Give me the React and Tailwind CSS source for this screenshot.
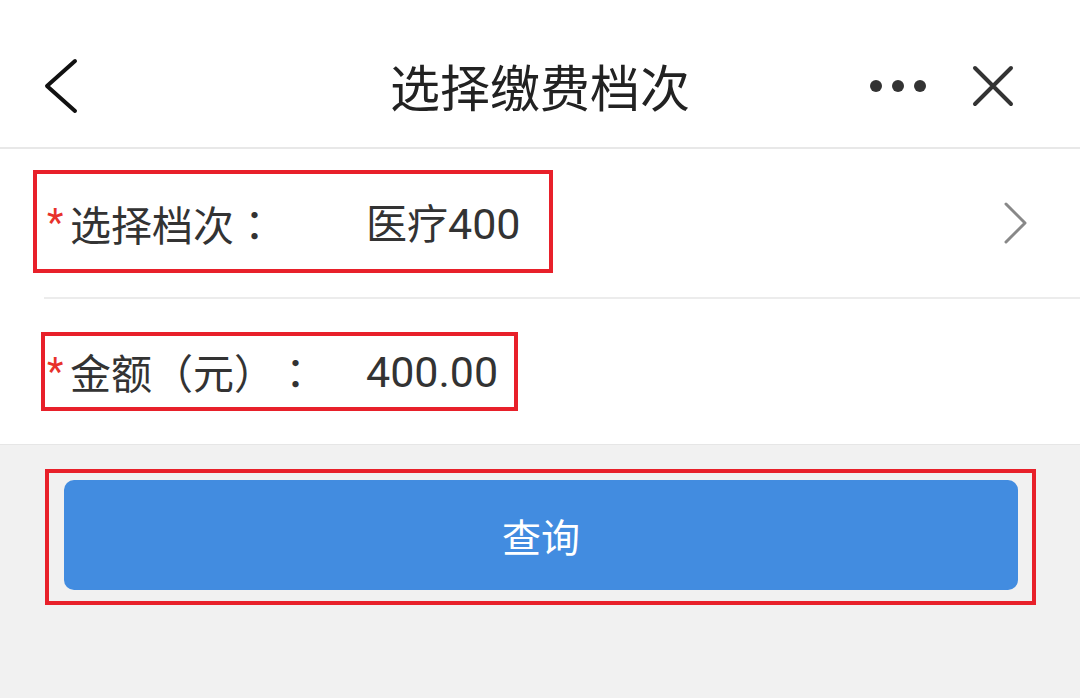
import React from "react";

const font = { fontFamily: '"Noto Sans CJK SC", "Noto Sans", sans-serif' };
// full-width punctuation sits centered / hugging like the Android render
const punct = { fontFamily: '"Noto Sans CJK JP", sans-serif' };
const latin = { fontFamily: 'Roboto, "Noto Sans CJK SC", sans-serif' };

function BackIcon() {
  return (
    <svg width="36" height="56" viewBox="0 0 36 56" fill="none">
      <polyline points="33,3 5,28 33,53" stroke="#111" strokeWidth="4" strokeLinecap="round" strokeLinejoin="round" />
    </svg>
  );
}

function CloseIcon() {
  return (
    <svg width="44" height="44" viewBox="0 0 44 44" fill="none">
      <path d="M4 4 L40 40 M40 4 L4 40" stroke="#333" strokeWidth="4" strokeLinecap="round" />
    </svg>
  );
}

function ChevronRight() {
  return (
    <svg width="26" height="44" viewBox="0 0 26 44" fill="none">
      <polyline points="3,3 22,22 3,41" stroke="#888" strokeWidth="3" strokeLinecap="round" strokeLinejoin="round" />
    </svg>
  );
}

function Field({ label, value }) {
  return (
    <div className="flex items-center [text-spacing-trim:space-all]">
      <span className="w-[23px] text-[38px] leading-none text-[#e8322b]" style={latin}>*</span>
      <span className="w-[296px] text-[41px] leading-none text-[#333]">{label}</span>
      <span className="text-[41px] leading-none text-[#333]">{value}</span>
    </div>
  );
}

const P = ({ children }) => <span style={punct}>{children}</span>;
const N = ({ children }) => <span className="text-[43px]" style={latin}>{children}</span>;

export default function App() {
  return (
    <div className="w-[1080px] h-[698px] bg-[#f1f1f1] overflow-hidden" style={font}>
      {/* nav bar */}
      <header className="h-[147px] bg-white grid grid-cols-[1fr_auto_1fr] items-center pt-[22px]">
        <div className="pl-[42px] flex items-center pt-[2px]">
          <BackIcon />
        </div>
        <h1 className="text-[50px] leading-none text-[#222]">选择缴费档次</h1>
        <div className="flex items-center justify-end pr-[65px] pt-[2px]">
          <div className="flex items-center gap-[10px]">
            <span className="w-[12px] h-[12px] rounded-full bg-[#333]" />
            <span className="w-[12px] h-[12px] rounded-full bg-[#333]" />
            <span className="w-[12px] h-[12px] rounded-full bg-[#333]" />
          </div>
          <div className="ml-[45px] flex">
            <CloseIcon />
          </div>
        </div>
      </header>
      <div className="h-[2px] bg-[#e8e8e8]" />

      {/* form */}
      <section className="bg-white">
        <div className="relative h-[148px] flex items-center pl-[47px] pr-[51px]">
          <Field label={<>选择档次<P>：</P></>} value={<>医疗<N>400</N></>} />
          <div className="ml-auto flex">
            <ChevronRight />
          </div>
          <div className="absolute left-[33px] top-[21px] w-[520px] h-[103px] border-[4px] border-[#e8202a]" />
        </div>
        <div className="ml-[44px] h-[2px] bg-[#ececec]" />
        <div className="relative h-[145px] flex items-center pl-[47px]">
          <Field label={<>金额<P>（</P>元<P>）：</P></>} value={<N>400.00</N>} />
          <div className="absolute left-[41px] top-[33px] w-[477px] h-[79px] border-[4px] border-[#e8202a]" />
        </div>
      </section>
      <div className="h-[1px] bg-[#e6e6e6]" />

      {/* action */}
      <div className="relative pl-[64px] pr-[62px] pt-[35px]">
        <button className="w-full h-[110px] rounded-[10px] bg-[#428ce0] text-white text-[39px] leading-none">
          查询
        </button>
        <div className="absolute left-[45px] top-[24px] w-[991px] h-[136px] border-[4px] border-[#e8202a]" />
      </div>
    </div>
  );
}
